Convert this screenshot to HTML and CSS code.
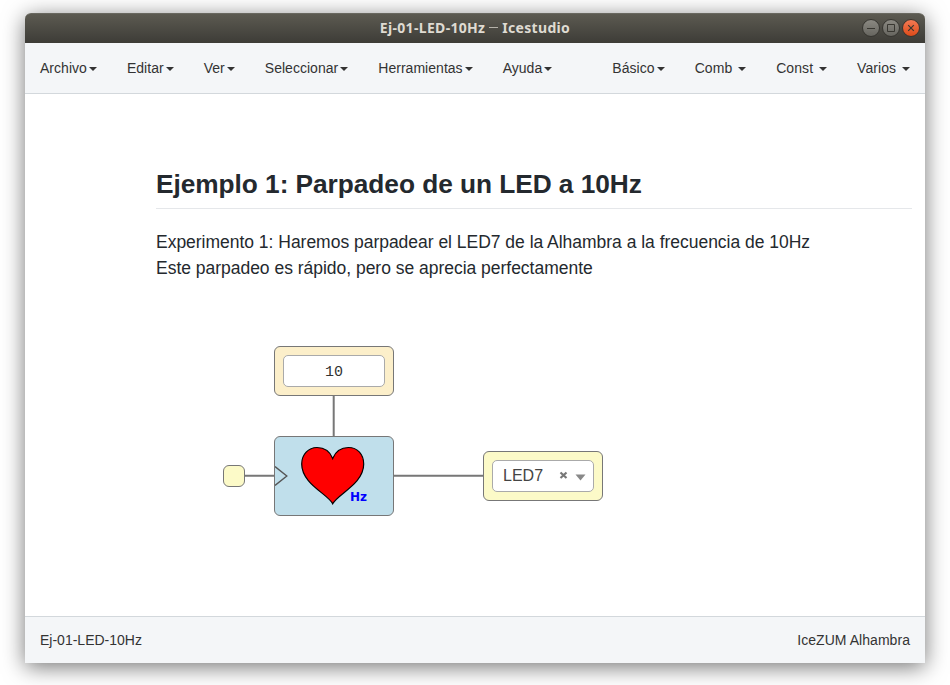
FILE: index.html
```html
<!DOCTYPE html>
<html lang="es">
<head>
<meta charset="utf-8">
<title>Ej-01-LED-10Hz ─ Icestudio</title>
<link rel="stylesheet" href="styles.css">
</head>
<body>
<div class="window">
  <header class="titlebar">
    <span class="title">Ej-01-LED-10Hz <span class="dash"></span> Icestudio</span>
    <svg class="controls" width="60" height="20" viewBox="0 0 60 20">
      <defs>
        <linearGradient id="gray" x1="0" y1="0" x2="0" y2="1"><stop offset="0" stop-color="#8c8a83"/><stop offset="1" stop-color="#65645e"/></linearGradient>
        <linearGradient id="orange" x1="0" y1="0" x2="0" y2="1"><stop offset="0" stop-color="#f47b55"/><stop offset="1" stop-color="#dd4a18"/></linearGradient>
      </defs>
      <g stroke="#35342f">
        <circle cx="10" cy="9" r="8.5" fill="url(#gray)"/>
        <circle cx="30" cy="9" r="8.5" fill="url(#gray)"/>
        <circle cx="50" cy="9" r="8.5" fill="url(#orange)"/>
      </g>
      <g fill="none" stroke="#383731">
        <path d="M6 9.500h8M26.500 5.500h7v7h-7z"/>
        <path d="M47.200 6.200l5.600 5.600M52.800 6.200l-5.600 5.600" stroke-width="1.200"/>
      </g>
    </svg>
  </header>
  <nav class="menubar">
    <ul class="menu">
      <li>Archivo<i class="caret"></i></li>
      <li>Editar<i class="caret"></i></li>
      <li>Ver<i class="caret"></i></li>
      <li>Seleccionar<i class="caret"></i></li>
      <li>Herramientas<i class="caret"></i></li>
      <li>Ayuda<i class="caret"></i></li>
    </ul>
    <ul class="menu tools">
      <li>Básico<i class="caret"></i></li>
      <li>Comb <i class="caret"></i></li>
      <li>Const <i class="caret"></i></li>
      <li>Varios <i class="caret"></i></li>
    </ul>
  </nav>
  <main class="canvas">
    <article class="notes">
      <h1>Ejemplo 1: Parpadeo de un LED a 10Hz</h1>
      <p>Experimento 1: Haremos parpadear el LED7 de la Alhambra a la frecuencia de 10Hz<br>Este parpadeo es rápido, pero se aprecia perfectamente</p>
    </article>
    <svg class="wires" width="900" height="522" viewBox="0 0 900 522">
      <path d="M308.700 300v44M218 381.800h34M367 381.800h93"/>
    </svg>
    <div class="block constant"><div class="field">10</div></div>
    <div class="block clock"></div>
    <div class="block heart">
      <svg width="118" height="78" viewBox="0 0 118 78">
        <path class="pin" d="M0 29.500L11.800 39L0 48.500"/>
        <path class="shape" d="M57.700 66.800C53 57 26.700 47 26.700 27C26.700 17.500 33.500 10.500 42 10.500C49.500 10.500 55 14.500 57.700 21.500C60.500 14.500 66 10.500 73.500 10.500C82.500 10.500 88.700 17.500 88.700 27C88.700 47 62.500 57 57.700 66.800Z"/>
        <text x="75" y="64">Hz</text>
      </svg>
    </div>
    <div class="block output">
      <div class="field select"><span class="pin-name">LED7</span>
        <svg class="select-icons" width="28" height="14" viewBox="0 0 28 14"><path d="M2.500 2.500l6 5.500M8.500 2.500l-6 5.500" fill="none" stroke="#777" stroke-width="2.200"/><path d="M17.500 4.500h10l-5 6z" fill="#888"/></svg>
      </div>
    </div>
  </main>
  <footer class="statusbar"><span>Ej-01-LED-10Hz</span><span class="board">IceZUM Alhambra</span></footer>
</div>
</body>
</html>
```
FILE: styles.css
```css
* { box-sizing: border-box; }
body {
  margin: 0;
  height: 685px;
  padding: 13px 25px 22px;
  overflow: hidden;
  background: #fff;
  color: #333;
  font: 14px/20px "Liberation Sans", Arial, sans-serif;
}
.window {
  display: flex;
  flex-direction: column;
  height: 650px;
  border-radius: 6px 6px 0 0;
  box-shadow: 0 4px 22px rgba(0, 0, 0, .55);
}
.titlebar {
  display: grid;
  grid-template-columns: 64px 1fr 64px;
  align-items: center;
  height: 30px;
  border-top: 1px solid #696860;
  border-radius: 6px 6px 0 0;
  background: linear-gradient(#5c5a51, #3d3c37);
}
.title {
  grid-column: 2;
  margin-top: -2px;
  text-align: center;
  white-space: nowrap;
  color: #dfdbd2;
  font: bold 14px/20px "Noto Sans", sans-serif;
  letter-spacing: .32px;
}
.dash {
  display: inline-block;
  width: 9px;
  height: 1px;
  background: #b5b2a9;
  vertical-align: 5px;
}
.controls { display: block; }
.menubar {
  display: flex;
  justify-content: space-between;
  height: 51px;
  padding: 15px;
  border-bottom: 1px solid #d3d8dc;
  background: #f4f6f8;
}
.menu {
  display: flex;
  gap: 30px;
  margin: 0;
  padding: 0;
  list-style: none;
  white-space: pre;
  letter-spacing: .03px;
}
.tools { letter-spacing: .06px; }
.caret {
  display: inline-block;
  margin-left: 2px;
  border-top: 4px solid #333;
  border-right: 4px solid transparent;
  border-left: 4px solid transparent;
  vertical-align: middle;
}
.canvas {
  position: relative;
  flex: 1;
  padding: 70px 13px 0 131px;
  background: #fff;
}
.notes { color: #24292e; font-size: 17.5px; line-height: 26.25px; letter-spacing: -.02px; }
.notes h1 {
  height: 45px;
  margin: 0 0 20px;
  padding-top: 4px;
  border-bottom: 1px solid #e5e7ea;
  font-size: 26.25px;
  line-height: 33px;
  letter-spacing: -.04px;
}
.notes p { margin: 0; }
.wires { position: absolute; left: 0; top: 0; }
.wires path { fill: none; stroke: #777; stroke-width: 2; }
.block {
  position: absolute;
  border: 1px solid #777;
  border-radius: 6px;
}
.constant { left: 249px; top: 252px; width: 120px; height: 50px; padding: 8px; background: #fcefca; }
.clock { left: 198px; top: 371px; width: 22px; height: 22px; background: #fcfac8; }
.heart { left: 249px; top: 342px; width: 120px; height: 80px; background: #c0dfeb; }
.output { left: 458px; top: 357px; width: 120px; height: 50px; padding: 8px; background: #fcfac8; }
.heart svg { display: block; }
.pin { fill: none; stroke: #555; stroke-width: 1.4; }
.shape { fill: #f00; stroke: #000; stroke-width: 1.2; }
.heart text { fill: #00f; font: bold 12px "DejaVu Sans", sans-serif; }
.field {
  height: 32px;
  border: 1px solid #aaa;
  border-radius: 5px;
  background: #fff;
  text-align: center;
  font: 15px/34px "Liberation Mono", monospace;
}
.select {
  display: flex;
  justify-content: space-between;
  padding: 0 7px 0 10px;
  color: #444;
  font: 16px/29px "Liberation Sans", Arial, sans-serif;
}
.select-icons { margin-top: 9px; }
.statusbar {
  display: flex;
  justify-content: space-between;
  height: 47px;
  padding: 13px 15px;
  border-top: 1px solid #d3d8dc;
  background: #f4f6f8;
}
.board { letter-spacing: .05px; }
```
